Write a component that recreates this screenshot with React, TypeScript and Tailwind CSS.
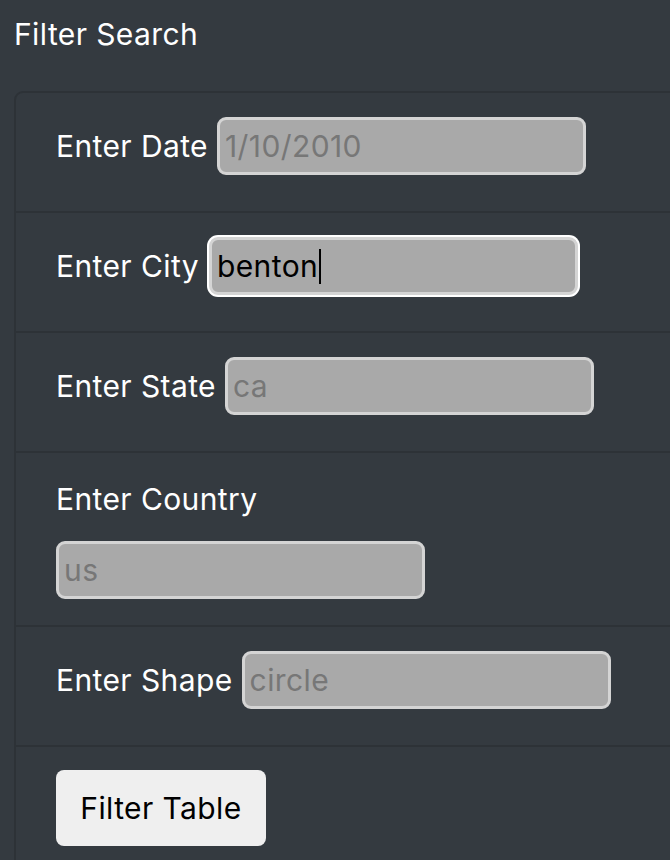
import React from 'react';

const inputClass =
  'h-[58px] w-[369px] rounded-[9px] border-[3px] border-[#d4d4d4] bg-[#a9a9a9] pl-[5px] text-[30px] tracking-[0.4px] text-black outline-none placeholder:text-[#777777]';

const rowClass = 'flex items-center border-t-2 border-[#2d3237] pl-[40px] pt-[24px] pb-[36px]';

const InlineField: React.FC<{ label: string; placeholder: string }> = ({ label, placeholder }) => (
  <div className={rowClass}>
    <label className="mr-[9px] leading-[45px] text-white">{label}</label>
    <input type="text" placeholder={placeholder} className={inputClass} />
  </div>
);

export default function App() {
  return (
    <div
      className="min-h-screen overflow-hidden bg-[#343a40] text-[30px] tracking-[0.4px]"
      style={{ fontFamily: 'Inter, "Liberation Sans", sans-serif' }}
    >
      <h5 className="ml-[14px] mt-[12px] mb-[34px] text-[30px] font-normal leading-[45px] text-white">Filter Search</h5>

      <div className="ml-[14px] w-[700px] rounded-tl-[9px] border-2 border-[#2d3237]">
        <div className="flex items-center pl-[40px] pt-[24px] pb-[36px]">
          <label className="mr-[9px] leading-[45px] text-white">Enter Date</label>
          <input type="text" placeholder="1/10/2010" className={inputClass} />
        </div>

        <div className={rowClass}>
          <label className="mr-[10px] leading-[45px] text-white">Enter City</label>
          <div className="relative">
            <input
              type="text"
              defaultValue="benton"
              className={`${inputClass} shadow-[0_0_0_2px_#ffffff]`}
            />
            <span className="pointer-events-none absolute left-[8px] top-[12px] h-[35px] border-r-2 border-black pr-[1px] text-[30px] leading-[35px] text-transparent">
              benton
            </span>
          </div>
        </div>

        <InlineField label="Enter State" placeholder="ca" />

        <div className="border-t-2 border-[#2d3237] pl-[40px] pt-[24px] pb-[26px]">
          <label className="block leading-[45px] text-white">Enter Country</label>
          <input type="text" placeholder="us" className={`${inputClass} mt-[19px] block`} />
        </div>

        <InlineField label="Enter Shape" placeholder="circle" />

        <div className="border-t-2 border-[#2d3237] pl-[40px] pt-[23px] pb-[40px]">
          <button
            type="button"
            className="h-[76px] w-[210px] rounded-[8px] bg-[#efefef] text-[30px] tracking-[0.4px] text-black"
          >
            Filter Table
          </button>
        </div>
      </div>
    </div>
  );
}
